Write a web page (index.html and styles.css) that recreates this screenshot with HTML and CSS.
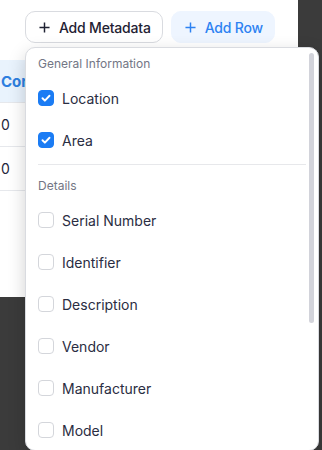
FILE: index.html
```html
<!DOCTYPE html>
<html>
<head>
<meta charset="utf-8">
<title>Add Metadata</title>
<link rel="stylesheet" href="styles.css">
</head>
<body>
<div class="sheet">
  <div class="toolbar">
    <button class="btn btn-outline">
      <svg class="plus" viewBox="0 0 12 12"><path d="M6 0.5v11M0.5 6h11"/></svg>
      <span>Add Metadata</span>
    </button>
    <button class="btn btn-soft">
      <svg class="plus" viewBox="0 0 12 12"><path d="M6 0.5v11M0.5 6h11"/></svg>
      <span>Add Row</span>
    </button>
  </div>

  <table class="grid">
    <tr><th>Cor</th></tr>
    <tr><td>0</td></tr>
    <tr><td>0</td></tr>
  </table>
</div>

<div class="menu">
  <div class="menu-label">General Information</div>
  <label class="menu-item"><span class="check on"><svg viewBox="0 0 16 16"><path d="M4 8.3l2.7 2.7L12 5.4"/></svg></span>Location</label>
  <label class="menu-item"><span class="check on"><svg viewBox="0 0 16 16"><path d="M4 8.3l2.7 2.7L12 5.4"/></svg></span>Area</label>
  <div class="menu-sep"></div>
  <div class="menu-label">Details</div>
  <label class="menu-item"><span class="check"></span>Serial Number</label>
  <label class="menu-item"><span class="check"></span>Identifier</label>
  <label class="menu-item"><span class="check"></span>Description</label>
  <label class="menu-item"><span class="check"></span>Vendor</label>
  <label class="menu-item"><span class="check"></span>Manufacturer</label>
  <label class="menu-item"><span class="check"></span>Model</label>
  <div class="thumb"></div>
</div>
</body>
</html>
```
FILE: styles.css
```css
body {
   margin: 0;
   background-color: #3b3b3b;
   font-family: Inter, "Noto Sans", sans-serif;
   font-size: 14px;
   color: #23263a;
}

.sheet {
   width: 298px;
   height: 297px;
   background-color: white;
}

.toolbar {
   display: flex;
   gap: 8px;
   padding: 11px 0 0 25px;
   height: 60px;
   box-sizing: border-box;
}

.btn {
   display: flex;
   align-items: center;
   gap: 9px;
   height: 32px;
   padding: 0 11px 0 13px;
   border-radius: 10px;
   font-family: inherit;
   font-size: 14px;
   font-weight: 500;
   letter-spacing: -0.2px;
   cursor: pointer;
}

.btn-outline {
   background-color: white;
   border: 1px solid #d9dbe0;
   color: #1f2233;
}

.btn-soft {
   background-color: #eef5ff;
   border: 1px solid #eef5ff;
   color: #2d82f2;
}

.plus {
   width: 11px;
   height: 11px;
   fill: none;
   stroke: currentColor;
   stroke-width: 1.6;
}

.grid {
   border-collapse: collapse;
   width: 298px;
}

.grid th, .grid td {
   text-align: left;
   padding: 0 0 0 1px;
   border-bottom: 1px solid #e6e8ec;
}

.grid th {
   height: 42px;
   background-color: #e9f3fd;
   color: #2d7fe0;
   font-weight: 700;
   font-size: 15px;
}

.grid td {
   height: 43px;
   font-size: 14px;
   color: #23263a;
}

.menu {
   position: absolute;
   left: 25px;
   top: 47px;
   width: 280px;
   height: 397px;
   padding: 5px 0 0 12px;
   box-sizing: content-box;
   background-color: white;
   border: 1px solid #d9dbe0;
   border-radius: 10px;
   box-shadow: 0 6px 18px rgba(0, 0, 0, 0.18);
   overflow: hidden;
}

.menu-label {
   line-height: 22px;
   margin-bottom: 2px;
   font-size: 12px;
   color: #737685;
}

.menu-item {
   display: flex;
   align-items: center;
   gap: 8px;
   height: 42px;
   font-size: 14px;
   color: #2a2d42;
}

.check {
   width: 16px;
   height: 16px;
   box-sizing: border-box;
   border: 1px solid #d4d6db;
   border-radius: 4px;
   flex: none;
}

.check.on {
   background-color: #1b7cf4;
   border-color: #1b7cf4;
}

.check svg {
   display: block;
   width: 14px;
   height: 14px;
   fill: none;
   stroke: white;
   stroke-width: 2.2;
   stroke-linecap: round;
   stroke-linejoin: round;
}

.menu-sep {
   height: 1px;
   background-color: #e7e8eb;
   margin: 3px 12px 10px 0;
}

.thumb {
   position: absolute;
   top: 5px;
   right: 4px;
   width: 5px;
   height: 270px;
   border-radius: 3px;
   background-color: #d2d3da;
}
```
